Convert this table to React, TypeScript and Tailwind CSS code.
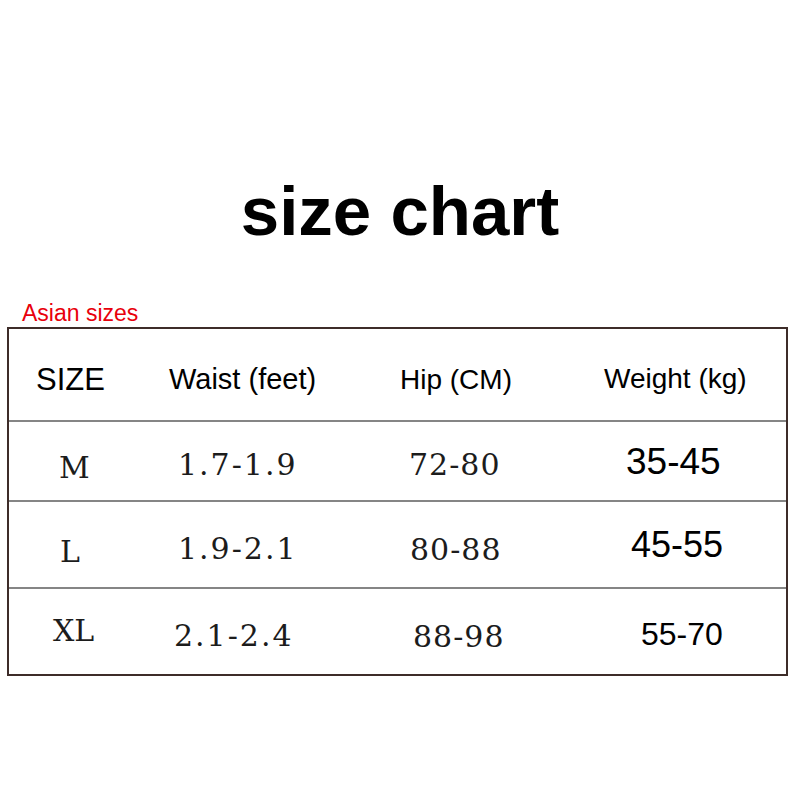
import React from "react";

type Cell = { text: string; cls: string };

const sans = "font-['Liberation_Sans',Arial,sans-serif]";
const serif = "font-['DejaVu_Serif','Liberation_Serif',serif]";

const header: Cell[] = [
  { text: "SIZE", cls: "pl-[27px] pt-[35px] text-[31px]" },
  { text: "Waist (feet)", cls: "pl-[34px] pt-[36px] text-[29px]" },
  { text: "Hip (CM)", cls: "pl-[55px] pt-[37px] text-[28px]" },
  { text: "Weight (kg)", cls: "pl-[39px] pt-[36px] text-[28px]" },
];

const rows: { h: string; cells: Cell[] }[] = [
  {
    h: "h-[80px]",
    cells: [
      { text: "M", cls: "pl-[50px] pt-[31px]" },
      { text: "1.7-1.9", cls: "pl-[43px] pt-[28px] tracking-[2px]" },
      { text: "72-80", cls: "pl-[64px] pt-[28px] tracking-[1px]" },
      { text: "35-45", cls: "pl-[61px] pt-[21px]" },
    ],
  },
  {
    h: "h-[87px]",
    cells: [
      { text: "L", cls: "pl-[51px] pt-[35px]" },
      { text: "1.9-2.1", cls: "pl-[43px] pt-[32px] tracking-[2px]" },
      { text: "80-88", cls: "pl-[65px] pt-[33px] tracking-[1px]" },
      { text: "45-55", cls: "pl-[66px] pt-[25px]" },
    ],
  },
  {
    h: "h-[87px]",
    cells: [
      { text: "XL", cls: "pl-[44px] pt-[27px]" },
      { text: "2.1-2.4", cls: "pl-[39px] pt-[32px] tracking-[2px]" },
      { text: "88-98", cls: "pl-[68px] pt-[33px] tracking-[1px]" },
      { text: "55-70", cls: "pl-[76px] pt-[29px]" },
    ],
  },
];

const weightSize = ["text-[37px]", "text-[36px]", "text-[32px]"];

const App = () => {
  return (
    <div className="w-[800px] h-[800px] bg-white text-black overflow-hidden">
      <h1 className={`${sans} pt-[177px] h-[247px] text-center text-[69px] leading-none font-bold`}>
        size chart
      </h1>
      <div className={`${sans} mt-[55px] ml-[22px] h-[22px] text-[23px] leading-none text-[#e8000b]`}>
        Asian sizes
      </div>
      <div className="mt-[3px] ml-[7px] w-[781px] border-2 border-[#3d2c29]">
        <div className={`${sans} grid grid-cols-[126px_210px_220px_221px] h-[91px]`}>
          {header.map((c) => (
            <div key={c.text} className={`${c.cls} leading-none whitespace-nowrap`}>
              {c.text}
            </div>
          ))}
        </div>
        {rows.map((r, i) => (
          <div
            key={i}
            className={`grid grid-cols-[126px_210px_220px_221px] border-t-2 border-[#858585] ${r.h}`}
          >
            {r.cells.map((c, j) => (
              <div
                key={j}
                className={
                  j === 3
                    ? `${sans} ${weightSize[i]} ${c.cls} leading-none whitespace-nowrap`
                    : `${serif} text-[30px] text-[#1c1c1c] ${c.cls} leading-none whitespace-nowrap`
                }
              >
                {c.text}
              </div>
            ))}
          </div>
        ))}
      </div>
    </div>
  );
};

export default App;
